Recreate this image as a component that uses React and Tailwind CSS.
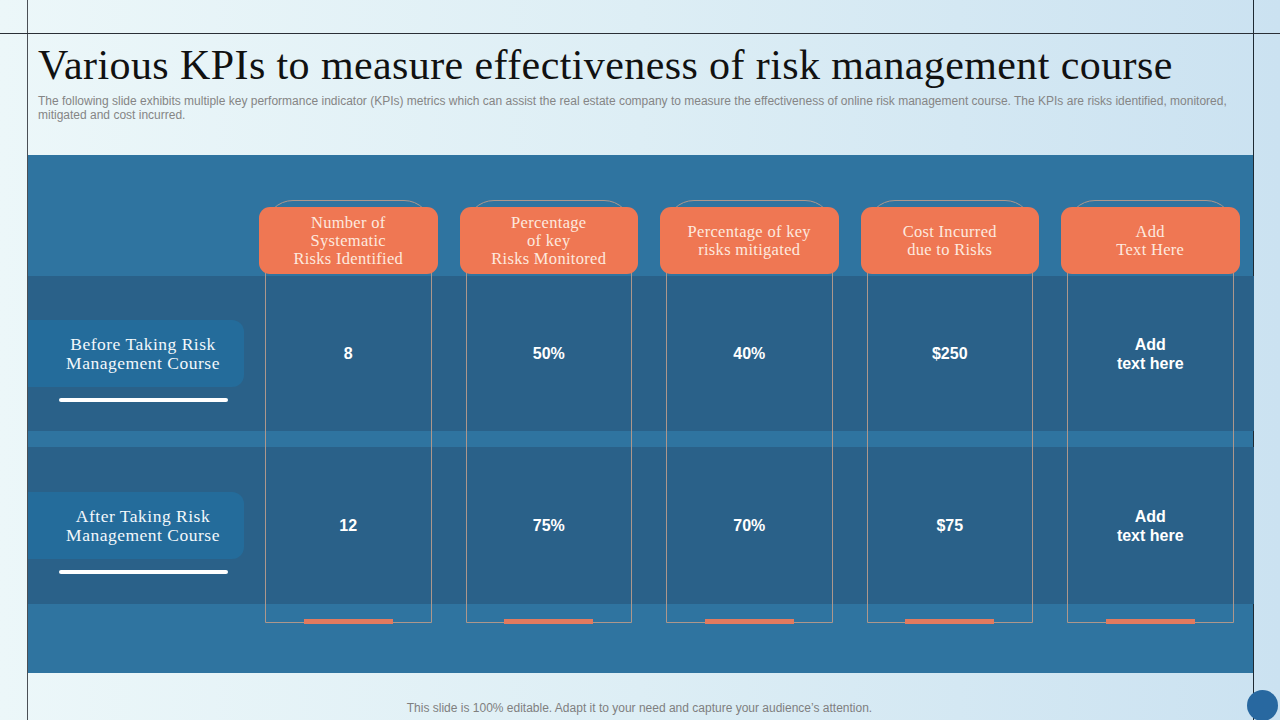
import React from "react";

const cols = [
  { head: ["Number of", "Systematic", "Risks Identified"], v1: "8", v2: "12" },
  { head: ["Percentage", "of key", "Risks Monitored"], v1: "50%", v2: "75%" },
  { head: ["Percentage of key", "risks mitigated"], v1: "40%", v2: "70%" },
  { head: ["Cost Incurred", "due to Risks"], v1: "$250", v2: "$75" },
  { head: ["Add", "Text Here"], v1: ["Add", "text here"], v2: ["Add", "text here"] },
];

const colStart = ["col-start-2", "col-start-3", "col-start-4", "col-start-5", "col-start-6"];

function Value({ v }) {
  if (Array.isArray(v)) {
    return (
      <div className="flex flex-col items-center leading-[19px]">
        {v.map((l) => (
          <span key={l}>{l}</span>
        ))}
      </div>
    );
  }
  return <span>{v}</span>;
}

export default function App() {
  const serif = { fontFamily: '"Liberation Serif", "Times New Roman", serif' };
  return (
    <div
      className="relative w-[1280px] h-[720px] overflow-hidden bg-gradient-to-r from-[#ecf7f9] via-[#ddeef5] to-[#cbe2f1]"
      style={{ fontFamily: '"Liberation Sans", Arial, sans-serif' }}
    >
      {/* horizontal frame line */}
      <div className="absolute left-0 right-0 top-[33px] h-px bg-[#2a2f36]" />

      <div className="ml-[27px] w-[1227px] h-[720px] border-l border-r border-l-[#4a4f55] border-r-[#1f2a33] flex flex-col">
        {/* header */}
        <div className="h-[155px] pl-[10px] pt-[42px]">
          <h1
            className="text-[42px] leading-[46px] text-[#111] tracking-[0.4px] whitespace-nowrap"
            style={serif}
          >
            Various KPIs to measure effectiveness of risk management course
          </h1>
          <p className="mt-[6px] text-[12px] leading-[14px] text-[#858585] whitespace-nowrap">
            The following slide exhibits multiple key performance indicator (KPIs) metrics which can assist the real estate company to measure the effectiveness of online risk management course. The KPIs are risks identified, monitored,
            <br />
            mitigated and cost incurred.
          </p>
        </div>

        {/* blue panel */}
        <div className="w-[1225px] h-[518px] bg-[#2f74a0] grid grid-cols-[209px_repeat(5,178.5px)] grid-rows-[121px_155px_16px_157px_69px] gap-x-[22px]">
          <div className="row-start-2 col-start-1 col-span-6 -mr-[14px] bg-[#2a6189]" />
          <div className="row-start-4 col-start-1 col-span-6 -mr-[14px] bg-[#2a6189]" />

          {/* row labels */}
          {[
            ["Before Taking Risk", "Management Course", "row-start-2", "mt-[44px]"],
            ["After Taking Risk", "Management Course", "row-start-4", "mt-[45px]"],
          ].map(([a, b, row, mt]) => (
            <div key={a} className={`${row} col-start-1 flex flex-col ${mt}`}>
              <div
                className="w-[216px] h-[67px] pl-[14px] rounded-r-[12px] bg-[#246c9b] flex flex-col items-center justify-center text-[17.5px] leading-[19px] tracking-[0.5px] text-[#f3f8fb]"
                style={serif}
              >
                <span>{a}</span>
                <span>{b}</span>
              </div>
              <div className="mt-[11px] ml-[31px] w-[169px] h-[4px] rounded-full bg-white" />
            </div>
          ))}

          {cols.map((c, i) => (
            <React.Fragment key={i}>
              {/* outline */}
              <div
                className={`${colStart[i]} row-start-1 row-span-5 mt-[45px] mb-[50px] mx-[6px] border border-[#ad978c] rounded-t-[28px]`}
              />
              {/* header */}
              <div
                className={`${colStart[i]} row-start-1 self-end mb-[2px] h-[67px] rounded-[11px] bg-[#ef7753] flex flex-col items-center justify-center text-[16.5px] leading-[18px] tracking-[0.3px] text-[#fde9df]`}
                style={serif}
              >
                {c.head.map((h) => (
                  <span key={h} className="whitespace-nowrap">{h}</span>
                ))}
              </div>
              <div className={`${colStart[i]} row-start-2 flex items-center justify-center text-white font-bold text-[16px]`}>
                <Value v={c.v1} />
              </div>
              <div className={`${colStart[i]} row-start-4 flex items-center justify-center text-white font-bold text-[16px]`}>
                <Value v={c.v2} />
              </div>
              <div className={`${colStart[i]} row-start-5 justify-self-center mt-[15px] w-[89px] h-[5px] bg-[#e27a5e]`} />
            </React.Fragment>
          ))}
        </div>

        {/* footer */}
        <div className="flex-1 flex items-end justify-center pb-[5px] pr-[2px]">
          <p className="text-[12px] leading-[14px] text-[#7f7f7f]">
            This slide is 100% editable. Adapt it to your need and capture your audience’s attention.
          </p>
        </div>
      </div>

      <div className="absolute left-[1247px] top-[690px] w-[31px] h-[31px] rounded-full bg-[#2868a0]" />
    </div>
  );
}
